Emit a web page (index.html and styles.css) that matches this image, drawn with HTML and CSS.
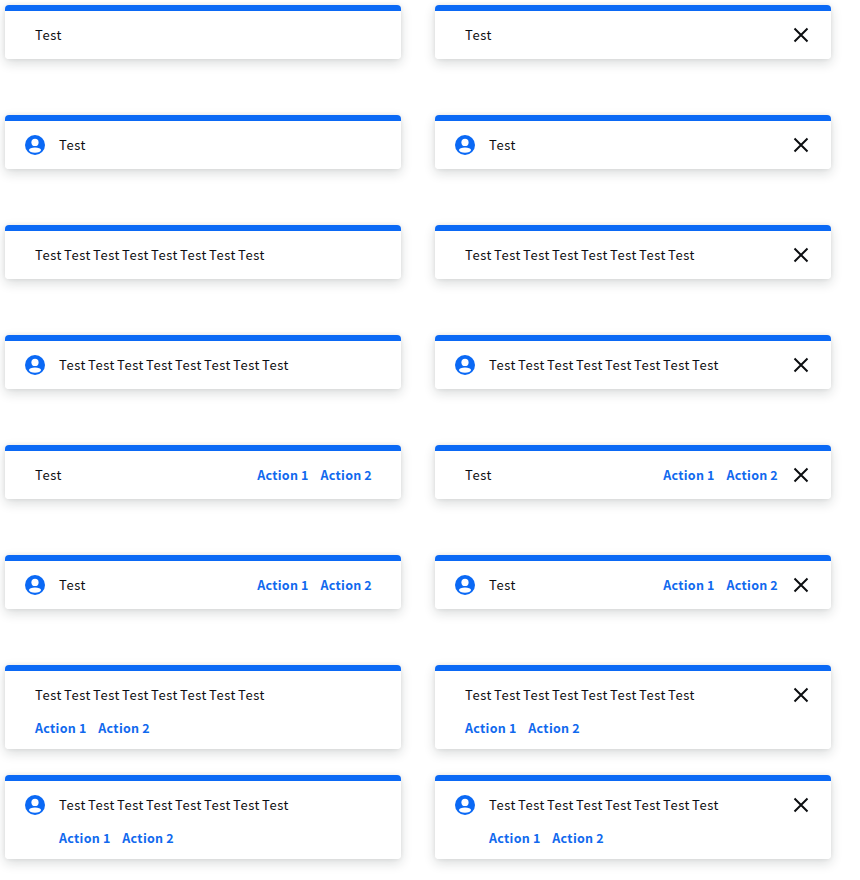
FILE: index.html
```html
<!DOCTYPE html>
<html lang="en">
<head>
<meta charset="utf-8">
<title>Notifications</title>
<link rel="stylesheet" href="styles.css">
</head>
<body>
<main class="grid" id="grid"></main>
<script src="app.js"></script>
</body>
</html>
```
FILE: styles.css
```css
body { margin: 0; background: #fff; color: #0c0e11; font: 13px/20px "Noto Sans CJK JP", "Noto Sans", sans-serif; }
.grid { display: grid; grid-template-columns: 396px 396px; column-gap: 34px; grid-auto-rows: 110px; padding: 5px; align-items: start; height: 870px; overflow: hidden; }
.card { box-sizing: border-box; display: flex; align-items: flex-start; min-height: 54px; padding: 20px 29px 10px 30px; border-radius: 4px; background: linear-gradient(#0b69f5 6px, #fff 6px); box-shadow: 0 4px 12px rgba(20,30,30,.16), 0 0 4px rgba(20,30,30,.07); }
.with-icon { padding-left: 18px; }
.closable { padding-right: 18px; }
.avatar { width: 24px; height: 24px; margin: -2px 12px 0 0; flex: none; }
.disc { fill: #0b69f5; }
.person { fill: #fff; }
.body { flex: 1; display: flex; justify-content: space-between; letter-spacing: .58px; word-spacing: -1.53px; }
.stacked .body { flex-direction: column; gap: 13px; }
.stacked { min-height: 84px; }
.actions { display: flex; gap: 11.7px; color: #1169ee; font-size: 12.5px; font-weight: 700; letter-spacing: .3px; word-spacing: -.4px; }
.close { width: 24px; height: 24px; margin: -2px 0 0 11px; stroke: #0c0e11; stroke-width: 2; flex: none; }
```
FILE: app.js
```js
const long = Array(8).fill('Test').join(' ');
const avatar = '<svg class="avatar" viewBox="0 0 24 24"><circle class="disc" cx="12" cy="12" r="10"/><circle class="person" cx="12" cy="9.4" r="3.6"/><ellipse class="person" cx="12" cy="17.1" rx="6" ry="2.7"/></svg>';
const close = '<svg class="close" viewBox="0 0 24 24"><path d="M5.5 5.5l13 13M18.5 5.5l-13 13"/></svg>';
const actions = '<div class="actions"><span>Action 1</span><span>Action 2</span></div>';
let html = '';
for (let i = 0; i < 8; i++) {
  const icon = i % 2 === 1, wide = i % 4 > 1, act = i > 3;
  for (const closable of [false, true]) {
    html += `<section class="card${icon ? ' with-icon' : ''}${closable ? ' closable' : ''}${wide && act ? ' stacked' : ''}">${icon ? avatar : ''}<div class="body"><span>${wide ? long : 'Test'}</span>${act ? actions : ''}</div>${closable ? close : ''}</section>`;
  }
}
document.getElementById('grid').innerHTML = html;
```
